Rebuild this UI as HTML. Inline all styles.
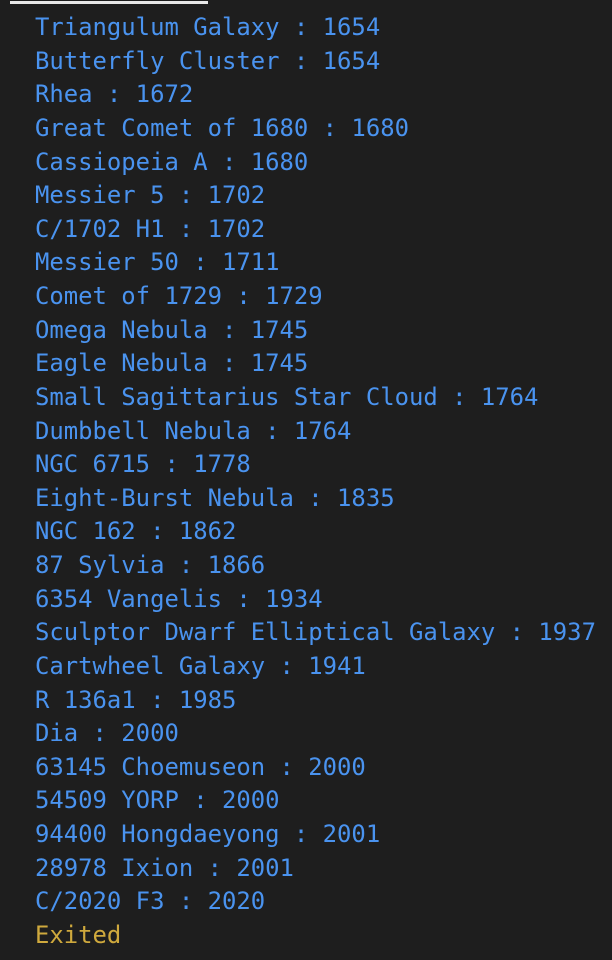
<!DOCTYPE html>
<html><head><meta charset="utf-8"><style>
html,body{margin:0;padding:0;background:#1e1e1e;width:612px;height:960px;overflow:hidden}
.bar{position:absolute;left:10px;top:1px;width:198px;height:3px;background:#e8e8e8}
pre{position:absolute;left:35px;top:11px;margin:0;font-family:"DejaVu Sans Mono","Liberation Mono",monospace;font-size:23.9px;line-height:33.63px;color:#4a93ef}
.y{color:#cfa93d}
</style></head><body>
<div class="bar"></div>
<pre>Triangulum Galaxy : 1654
Butterfly Cluster : 1654
Rhea : 1672
Great Comet of 1680 : 1680
Cassiopeia A : 1680
Messier 5 : 1702
C/1702 H1 : 1702
Messier 50 : 1711
Comet of 1729 : 1729
Omega Nebula : 1745
Eagle Nebula : 1745
Small Sagittarius Star Cloud : 1764
Dumbbell Nebula : 1764
NGC 6715 : 1778
Eight-Burst Nebula : 1835
NGC 162 : 1862
87 Sylvia : 1866
6354 Vangelis : 1934
Sculptor Dwarf Elliptical Galaxy : 1937
Cartwheel Galaxy : 1941
R 136a1 : 1985
Dia : 2000
63145 Choemuseon : 2000
54509 YORP : 2000
94400 Hongdaeyong : 2001
28978 Ixion : 2001
C/2020 F3 : 2020
<span class="y">Exited</span></pre>
</body></html>
